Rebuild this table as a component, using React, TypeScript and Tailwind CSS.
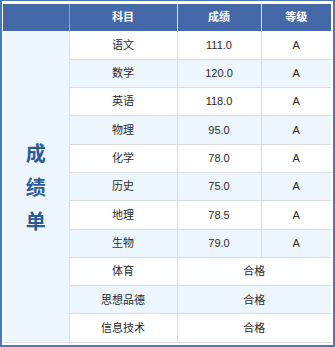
import React from "react";

const rows: { name: string; score?: string; grade?: string; pass?: string }[] = [
  { name: "语文", score: "111.0", grade: "A" },
  { name: "数学", score: "120.0", grade: "A" },
  { name: "英语", score: "118.0", grade: "A" },
  { name: "物理", score: "95.0", grade: "A" },
  { name: "化学", score: "78.0", grade: "A" },
  { name: "历史", score: "75.0", grade: "A" },
  { name: "地理", score: "78.5", grade: "A" },
  { name: "生物", score: "79.0", grade: "A" },
  { name: "体育", pass: "合格" },
  { name: "思想品德", pass: "合格" },
  { name: "信息技术", pass: "合格" },
];

export default function App() {
  return (
    <div
      className="w-[335px] h-[347px] bg-white border-2 border-t border-[#4a78b8] pt-[3px] px-px"
      style={{ fontFamily: '"Liberation Sans", "Noto Sans CJK SC", sans-serif' }}
    >
      <table className="w-[328px] border-collapse table-fixed text-[11px] text-[#2a2a2a]">
        <colgroup>
          <col className="w-[66px]" />
          <col className="w-[108px]" />
          <col className="w-[84px]" />
          <col className="w-[70px]" />
        </colgroup>
        <thead>
          <tr className="h-[27px] bg-[#4569a8] text-white font-bold">
            <th className="border-r border-[#8ea6cf] p-0"></th>
            <th className="border-r border-[#dfe6f2] p-0 font-bold">科目</th>
            <th className="border-r border-[#dfe6f2] p-0 font-bold">成绩</th>
            <th className="p-0 font-bold">等级</th>
          </tr>
        </thead>
        <tbody>
          {rows.map((r, i) => {
            const bg = i % 2 === 0 ? "bg-white" : "bg-[#eef6fd]";
            return (
              <tr key={r.name} className={`h-[28.3px] ${bg}`}>
                {i === 0 && (
                  <td
                    rowSpan={rows.length}
                    className="bg-[#eef6fd] border-r border-b border-[#e0e0e0] p-0 text-center align-middle"
                  >
                    <div className="flex flex-col items-center gap-[12px] pt-[4px] text-[20px] font-bold text-[#2b5a9a] leading-[22px]">
                      <span>成</span>
                      <span>绩</span>
                      <span>单</span>
                    </div>
                  </td>
                )}
                <td className="border-r border-b border-[#dcdcdc] p-0 text-center">{r.name}</td>
                {r.pass ? (
                  <td colSpan={2} className="border-b border-[#dcdcdc] p-0 text-center">
                    {r.pass}
                  </td>
                ) : (
                  <>
                    <td className="border-r border-b border-[#dcdcdc] p-0 text-center">{r.score}</td>
                    <td className="border-b border-[#dcdcdc] p-0 text-center">{r.grade}</td>
                  </>
                )}
              </tr>
            );
          })}
        </tbody>
      </table>
    </div>
  );
}
